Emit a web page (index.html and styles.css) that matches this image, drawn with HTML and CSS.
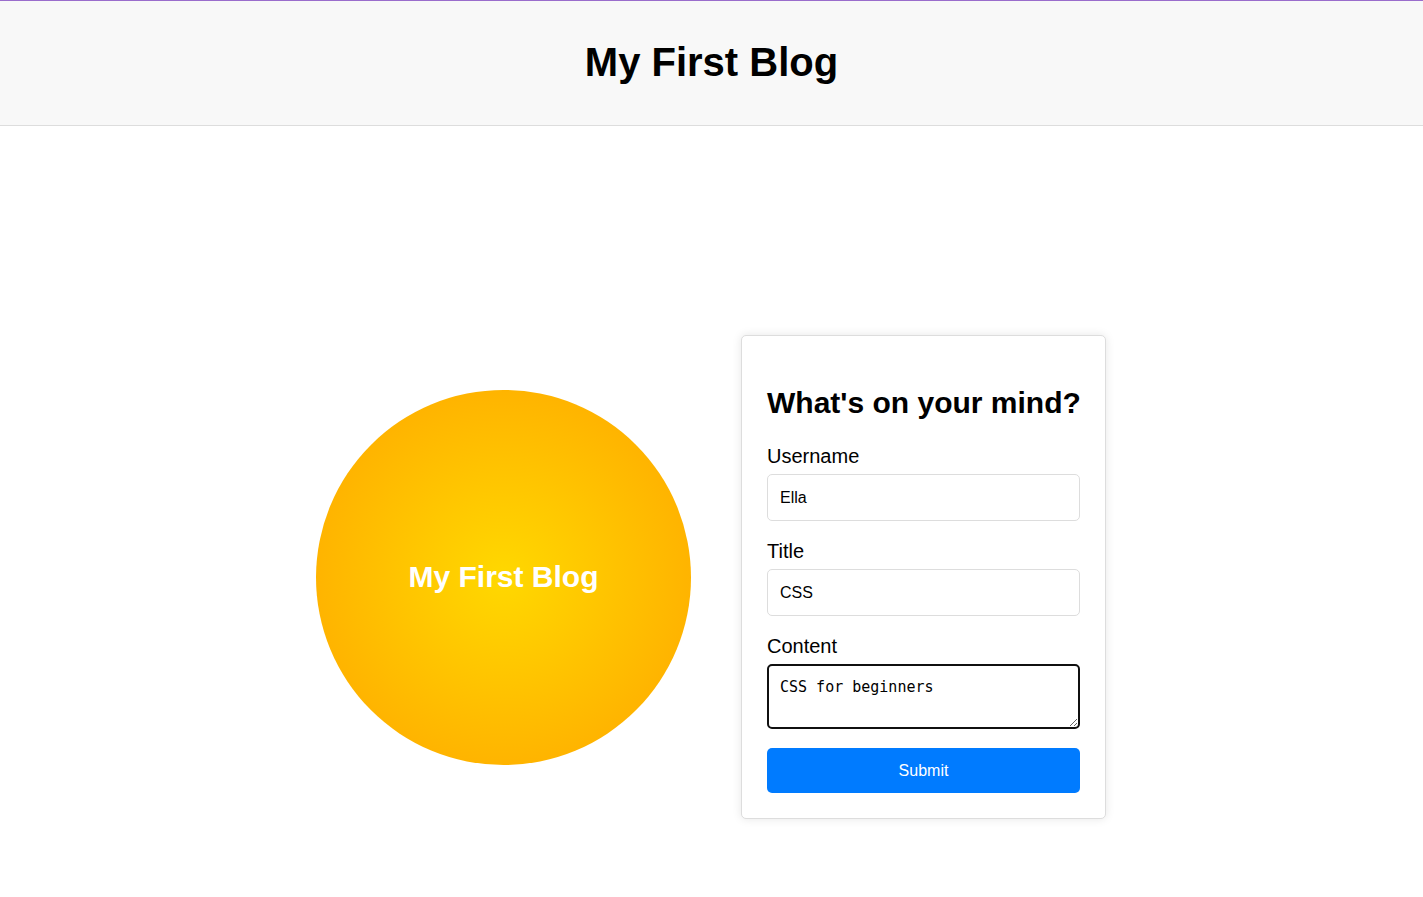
FILE: index.html
```html
<!DOCTYPE html>
<html lang="en">
<head>
<meta charset="utf-8">
<title>My First Blog</title>
<link rel="stylesheet" href="styles.css">
</head>
<body>
<header class="site-header">
  <h1 class="site-title">My First Blog</h1>
</header>
<main class="main">
  <div class="sun">
    <span class="sun-text">My First Blog</span>
  </div>
  <form class="card">
    <h2 class="card-title">What's on your mind?</h2>
    <label class="label" for="username">Username</label>
    <input class="field" id="username" type="text" value="Ella">
    <label class="label" for="title">Title</label>
    <input class="field" id="title" type="text" value="CSS">
    <label class="label" for="content">Content</label>
    <textarea class="area" id="content">CSS for beginners</textarea>
    <button class="submit" type="button">Submit</button>
  </form>
</main>
</body>
</html>
```
FILE: styles.css
```css
html, body {
  margin: 0;
  padding: 0;
}
body {
  font-family: "Liberation Sans", Arial, sans-serif;
  color: #000;
  background: #fff;
  border-top: 1px solid #9a6dcc;
}
.site-header {
  background: #f8f8f8;
  border-bottom: 1px solid #dddddd;
  padding: 12px 0 13px;
  text-align: center;
}
.site-title {
  margin: 0.67em 0;
  font-size: 40px;
  font-weight: bold;
}
.main {
  min-height: 100vh;
  padding: 3px 1px 0 0;
  display: flex;
  align-items: center;
  justify-content: center;
  gap: 50px;
}
.sun {
  width: 375px;
  height: 375px;
  flex: none;
  border-radius: 50%;
  background: radial-gradient(circle closest-side at center, #ffd800 0%, #ffc800 45%, #ffb400 100%);
  display: flex;
  align-items: center;
  justify-content: center;
}
.sun-text {
  color: #fff;
  font-size: 30px;
  font-weight: bold;
}
.card {
  width: 313px;
  padding: 25px 25px 25px;
  border: 1px solid #dddddd;
  border-radius: 5px;
  background: #fff;
  box-shadow: 0 0 10px rgba(0, 0, 0, 0.1);
  display: flex;
  flex-direction: column;
}
.card-title {
  margin: 25px 0 25px;
  font-size: 30px;
  font-weight: bold;
  white-space: nowrap;
}
.label {
  display: block;
  font-size: 20px;
  margin-bottom: 6px;
}
.field {
  box-sizing: border-box;
  width: 100%;
  height: 47px;
  margin: 0 0 19px;
  padding: 0 12px;
  border: 1px solid #dddddd;
  border-radius: 5px;
  font-family: "Liberation Sans", Arial, sans-serif;
  font-size: 16px;
  color: #000;
  background: #fff;
  outline: none;
}
.area {
  box-sizing: border-box;
  width: 100%;
  height: 65px;
  margin: 0 0 19px;
  padding: 12px 11px;
  border: 2px solid #101010;
  border-radius: 5px;
  font-family: "DejaVu Sans Mono", "Liberation Mono", monospace;
  font-size: 15px;
  color: #000;
  background: #fff;
  resize: vertical;
  outline: none;
}
.submit {
  height: 45px;
  width: 100%;
  border: none;
  border-radius: 5px;
  background: #007bff;
  color: #fff;
  font-family: "Liberation Sans", Arial, sans-serif;
  font-size: 16px;
  cursor: pointer;
}
```
